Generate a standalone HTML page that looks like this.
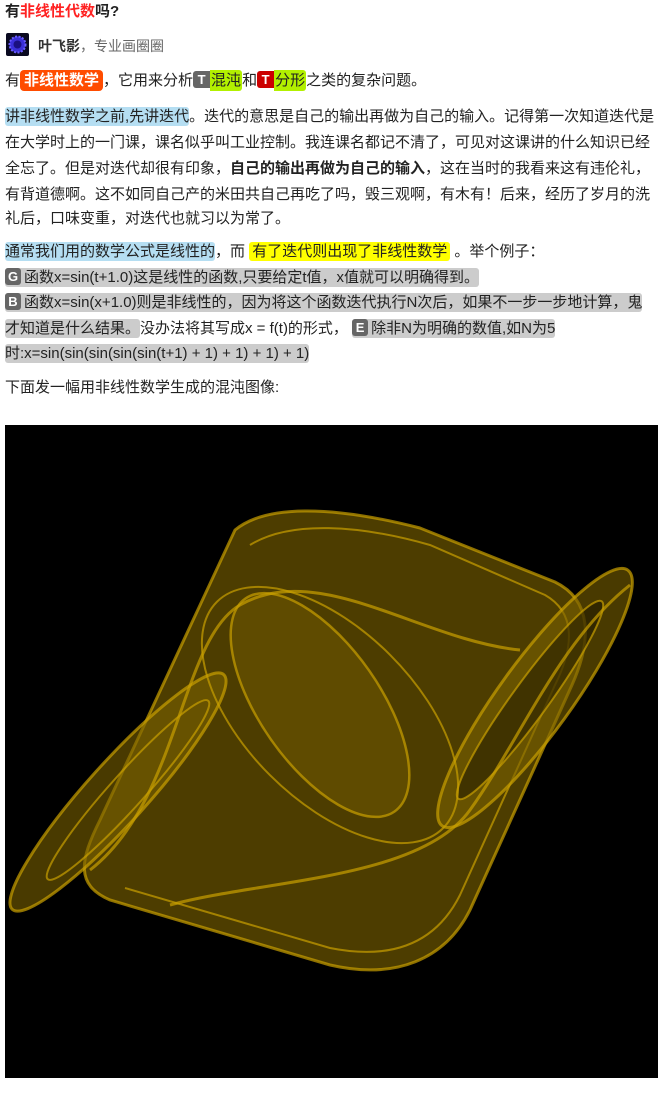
<!DOCTYPE html>
<html><head><meta charset="utf-8"><style>
body{margin:0;background:#fff;width:668px;height:1099px;overflow:hidden;position:relative;font-family:"Liberation Sans","Noto Sans CJK SC",sans-serif;color:#222;font-size:15px}
.l{position:absolute;left:5px;white-space:nowrap;height:22px;line-height:22px}
.hb{background:#b5def2;border-radius:3px;padding:1px 0}
.hy{background:#ffff00;border-radius:3px;padding:1px 3px}
.hg{background:#cccccc;border-radius:3px;padding:1px 0}
.bd{display:inline-block;background:#666;color:#fff;font-weight:bold;width:16px;height:17px;line-height:17px;text-align:center;border-radius:3px;font-size:13px;vertical-align:1px;margin-right:3px}
.or{background:#ff4c00;color:#fff;font-weight:bold;border-radius:4px;padding:2px 4px}
.gr{background:#b2f000;padding:2px 1px;border-radius:0 3px 3px 0}
</style></head><body>
<div class="l" style="top:1px;font-weight:bold;font-size:15px">有<span style="color:#ff2222">非线性代数</span>吗?</div>
<svg style="position:absolute;left:6px;top:33px" width="23" height="23" viewBox="0 0 23 23"><rect width="23" height="23" rx="2" fill="#0a0a20"/><circle cx="11.5" cy="11.5" r="8" fill="#3a2fd8" stroke="#6a5cff" stroke-width="2" stroke-dasharray="2 1.5"/><circle cx="11.5" cy="11.5" r="4" fill="#1a1080"/></svg>
<div class="l" style="left:38px;top:35px;font-size:14px"><b style="color:#333">叶飞影</b><span style="color:#666">，专业画圈圈</span></div>
<div class="l" style="top:70px">有<span class="or">非线性数学</span>，它用来分析<span class="bd" style="margin:0;border-radius:3px 0 0 3px;width:17px">T</span><span class="gr">混沌</span>和<span class="bd" style="margin:0;background:#cc0000;border-radius:3px 0 0 3px;width:17px">T</span><span class="gr">分形</span>之类的复杂问题。</div>
<div class="l" style="top:106px"><span class="hb">讲非线性数学之前,先讲迭代</span>。迭代的意思是自己的输出再做为自己的输入。记得第一次知道迭代是</div>
<div class="l" style="top:132px">在大学时上的一门课，课名似乎叫工业控制。我连课名都记不清了，可见对这课讲的什么知识已经</div>
<div class="l" style="top:158px">全忘了。但是对迭代却很有印象，<b>自己的输出再做为自己的输入</b>，这在当时的我看来这有违伦礼，</div>
<div class="l" style="top:184px">有背道德啊。这不如同自己产的米田共自己再吃了吗，毁三观啊，有木有！后来，经历了岁月的洗</div>
<div class="l" style="top:208px">礼后，口味变重，对迭代也就习以为常了。</div>
<div class="l" style="top:241px"><span class="hb">通常我们用的数学公式是线性的</span>，而 <span class="hy">有了迭代则出现了非线性数学</span> 。举个例子：</div>
<div class="l" style="top:267px"><span class="hg"><span class="bd">G</span>函数x=sin(t+1.0)这是线性的函数,只要给定t值，x值就可以明确得到。</span></div>
<div class="l" style="top:292px"><span class="hg"><span class="bd">B</span>函数x=sin(x+1.0)则是非线性的，因为将这个函数迭代执行N次后，如果不一步一步地计算，鬼</span></div>
<div class="l" style="top:318px"><span class="hg">才知道是什么结果。</span>没办法将其写成x = f(t)的形式， <span class="hg"><span class="bd">E</span>除非N为明确的数值,如N为5</span></div>
<div class="l" style="top:343px"><span class="hg">时:x=sin(sin(sin(sin(sin(t+1) + 1) + 1) + 1) + 1)</span></div>
<div class="l" style="top:377px">下面发一幅用非线性数学生成的混沌图像:</div>
<svg style="position:absolute;left:0;top:0" width="668" height="1099" viewBox="0 0 668 1099">
<rect x="5" y="425" width="653" height="653" fill="#000"/>
<g fill="none" stroke="#c9a000" stroke-opacity="0.7">
<path d="M235,530 C265,505 330,505 420,528 L555,582 C592,600 592,640 572,685 L470,910 C445,960 395,980 330,965 L110,900 C75,885 80,860 100,820 Z" fill="#4d3d00" stroke-width="3"/>
<path d="M250,545 C290,520 360,525 430,545 L545,595 C575,612 575,645 555,685 L460,895 C435,945 390,960 330,948 L125,888" stroke-width="2"/>
<ellipse cx="535" cy="698" rx="158" ry="36" transform="rotate(-54 535 698)" fill="#7a6000" fill-opacity="0.6" stroke-width="3"/>
<ellipse cx="530" cy="700" rx="122" ry="18" transform="rotate(-54 530 700)" fill="#1a1400" fill-opacity="0.5" stroke-width="2"/>
<ellipse cx="118" cy="792" rx="158" ry="30" transform="rotate(-48 118 792)" fill="#7a6000" fill-opacity="0.6" stroke-width="3"/>
<ellipse cx="128" cy="790" rx="120" ry="17" transform="rotate(-48 128 790)" stroke-width="2"/>
<ellipse cx="320" cy="705" rx="130" ry="60" transform="rotate(55 320 705)" fill="#8a6e00" fill-opacity="0.3" stroke-width="2.5"/>
<ellipse cx="330" cy="715" rx="160" ry="85" transform="rotate(45 330 715)" stroke-width="2"/>
<path d="M90,870 C180,800 180,640 240,605 C320,560 420,640 520,650" stroke-width="3"/>
<path d="M170,905 C260,880 420,880 470,810 C520,740 560,640 630,585" stroke-width="3"/>
</g>
</svg>
</body></html>
